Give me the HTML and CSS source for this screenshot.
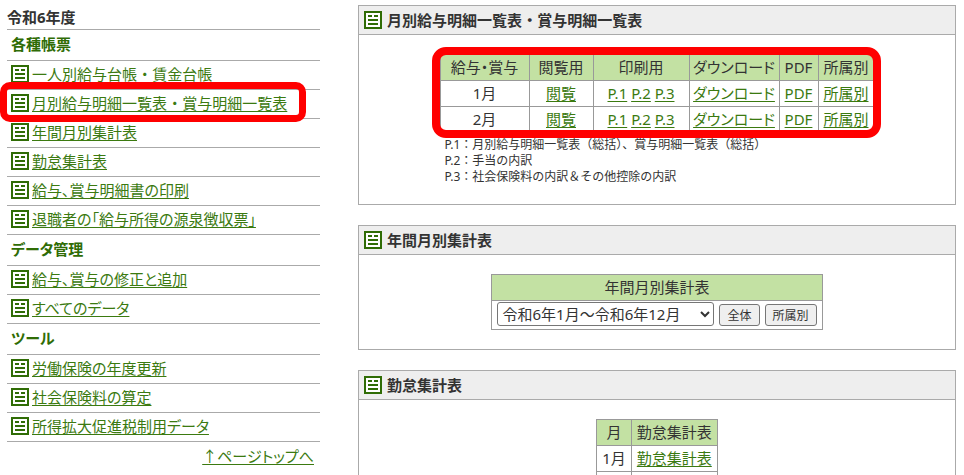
FILE: index.html
```
<!DOCTYPE html>
<html lang="ja">
<head>
    <meta charset="UTF-8">
    <meta name="viewport" content="width=device-width, initial-scale=1.0">
    <title>令和6年度 各種帳票</title>
    <link rel="stylesheet" href="styles.css">
</head>
<body>

<!-- Shared list icon -->
<svg class="sprite" aria-hidden="true">
    <symbol id="icon-list" viewBox="0 0 18 18">
        <rect x="1" y="1" width="16" height="16" fill="#fff" stroke="#2f6c05" stroke-width="2"/>
        <path d="M4 5h4M10 5h4M4 9h10M4 13h10" fill="none" stroke="#2f6c05" stroke-width="2"/>
    </symbol>
</svg>

<div class="container">
    <!-- Side menu -->
    <nav class="side-menu">
        <h1>令和6年度</h1>
        <h2>各種帳票</h2>
        <ul>
            <li><svg class="icon"><use href="#icon-list"/></svg><a href="#">一人別給与台帳 ・ 賃金台帳</a></li>
            <li class="marked"><svg class="icon"><use href="#icon-list"/></svg><a href="#monthly">月別給与明細一覧表 ・ 賞与明細一覧表</a></li>
            <li><svg class="icon"><use href="#icon-list"/></svg><a href="#yearly">年間月別集計表</a></li>
            <li><svg class="icon"><use href="#icon-list"/></svg><a href="#attendance">勤怠集計表</a></li>
            <li><svg class="icon"><use href="#icon-list"/></svg><a href="#">給与、賞与明細書の印刷</a></li>
            <li><svg class="icon"><use href="#icon-list"/></svg><a href="#">退職者の「給与所得の源泉徴収票」</a></li>
        </ul>
        <h2>データ管理</h2>
        <ul>
            <li><svg class="icon"><use href="#icon-list"/></svg><a href="#">給与、賞与の修正と追加</a></li>
            <li><svg class="icon"><use href="#icon-list"/></svg><a href="#">すべてのデータ</a></li>
        </ul>
        <h2>ツール</h2>
        <ul>
            <li><svg class="icon"><use href="#icon-list"/></svg><a href="#">労働保険の年度更新</a></li>
            <li><svg class="icon"><use href="#icon-list"/></svg><a href="#">社会保険料の算定</a></li>
            <li><svg class="icon"><use href="#icon-list"/></svg><a href="#">所得拡大促進税制用データ</a></li>
        </ul>
        <p class="page-top"><a href="#">↑ページトップへ</a></p>
    </nav>

    <main class="main">
        <!-- Monthly list -->
        <section class="panel" id="monthly">
            <h2><svg class="icon"><use href="#icon-list"/></svg>月別給与明細一覧表 ・ 賞与明細一覧表</h2>
            <div class="panel-body">
                <div class="monthly">
                    <div class="table-mark">
                        <table class="monthly-table">
                            <tr>
                                <th class="col-name">給与・賞与</th>
                                <th class="col-view">閲覧用</th>
                                <th class="col-print">印刷用</th>
                                <th class="col-download">ダウンロード</th>
                                <th class="col-pdf">PDF</th>
                                <th class="col-group">所属別</th>
                            </tr>
                            <tr>
                                <td>1月</td>
                                <td><a href="#">閲覧</a></td>
                                <td><a href="#">P.1</a> <a href="#">P.2</a> <a href="#">P.3</a></td>
                                <td><a href="#">ダウンロード</a></td>
                                <td><a href="#">PDF</a></td>
                                <td><a href="#">所属別</a></td>
                            </tr>
                            <tr>
                                <td>2月</td>
                                <td><a href="#">閲覧</a></td>
                                <td><a href="#">P.1</a> <a href="#">P.2</a> <a href="#">P.3</a></td>
                                <td><a href="#">ダウンロード</a></td>
                                <td><a href="#">PDF</a></td>
                                <td><a href="#">所属別</a></td>
                            </tr>
                        </table>
                    </div>
                    <p class="notes">
                        P.1：月別給与明細一覧表（総括）、賞与明細一覧表（総括）<br>
                        P.2：手当の内訳<br>
                        P.3：社会保険料の内訳＆その他控除の内訳
                    </p>
                </div>
            </div>
        </section>

        <!-- Yearly summary -->
        <section class="panel" id="yearly">
            <h2><svg class="icon"><use href="#icon-list"/></svg>年間月別集計表</h2>
            <div class="panel-body">
                <table>
                    <tr>
                        <th><label for="period">年間月別集計表</label></th>
                    </tr>
                    <tr>
                        <td>
                            <form class="period-form">
                                <select id="period">
                                    <option>令和6年1月～令和6年12月</option>
                                </select>
                                <button type="button">全体</button>
                                <button type="button">所属別</button>
                            </form>
                        </td>
                    </tr>
                </table>
            </div>
        </section>

        <!-- Attendance summary -->
        <section class="panel" id="attendance">
            <h2><svg class="icon"><use href="#icon-list"/></svg>勤怠集計表</h2>
            <div class="panel-body">
                <table>
                    <tr>
                        <th>月</th>
                        <th>勤怠集計表</th>
                    </tr>
                    <tr>
                        <td>1月</td>
                        <td><a href="#">勤怠集計表</a></td>
                    </tr>
                    <tr>
                        <td></td>
                        <td></td>
                    </tr>
                </table>
            </div>
        </section>
    </main>
</div>

</body>
</html>
```
FILE: styles.css
```
* {
    box-sizing: border-box;
}

body {
    margin: 0;
    padding: 5px 8px 0 7px;
    background: #fff;
    color: #333;
    font-family: "Noto Sans", "Noto Sans CJK JP", sans-serif;
    font-size: 15px;
    line-height: 20px;
    font-feature-settings: "palt";
}

h1, h2, ul, p {
    margin: 0;
    padding: 0;
}

a {
    color: #3b7a10;
    text-decoration: underline;
    text-underline-offset: 2px;
}

.sprite {
    display: none;
}

.icon {
    width: 18px;
    height: 18px;
    flex: none;
}

.container {
    display: flex;
    align-items: flex-start;
    gap: 38px;
}

/* Side menu */
.side-menu {
    flex: 313 1 0;
    min-width: 0;
}

.side-menu h1 {
    height: 25px;
    border-bottom: 1px solid #aaa;
    font-size: 15px;
    line-height: 24px;
}

.side-menu h2 {
    height: 31px;
    padding-left: 4px;
    border-bottom: 1px solid #aaa;
    color: #2f6c05;
    font-size: 15px;
    line-height: 28px;
}

.side-menu ul {
    list-style: none;
}

.side-menu li {
    display: flex;
    align-items: center;
    gap: 3px;
    position: relative;
    height: 29px;
    padding: 0 0 2px 4px;
    border-bottom: 1px solid #aaa;
    white-space: nowrap;
}

/* Red frame round the current menu item */
.side-menu .marked::after {
    content: "";
    position: absolute;
    top: -8px;
    right: 14px;
    bottom: -4px;
    left: -7px;
    border: 7px solid #f00;
    border-radius: 10px;
    pointer-events: none;
}

.page-top {
    padding: 4px 6px 0 0;
    text-align: right;
}

/* Panels */
.main {
    flex: 598 1 0;
    min-width: 0;
    display: flex;
    flex-direction: column;
    gap: 20px;
}

.panel {
    border: 1px solid #aaa;
}

.panel h2 {
    display: flex;
    align-items: center;
    gap: 5px;
    height: 29px;
    padding-left: 5px;
    border-bottom: 1px solid #aaa;
    background: #eee;
    font-size: 15px;
}

.panel-body {
    display: flex;
    justify-content: center;
    padding: 19px 10px;
}

table {
    border-collapse: collapse;
}

th, td {
    height: 26px;
    padding: 1px 5px 3px;
    border: 1px solid #999;
    font-weight: normal;
    text-align: center;
    white-space: nowrap;
}

th {
    background: #c3e1a3;
}

.monthly-table {
    table-layout: fixed;
    width: 434px;
}

.col-name {
    width: 89px;
}

.col-view {
    width: 64px;
}

.col-print {
    width: 96px;
}

.col-download {
    width: 90px;
}

.col-pdf {
    width: 39px;
}

.col-group {
    width: 56px;
}

.monthly-table th, .monthly-table td {
    padding: 1px 0 3px;
}

/* Red frame round the monthly table */
.table-mark {
    position: relative;
}

.table-mark::after {
    content: "";
    position: absolute;
    top: -7px;
    right: -6px;
    bottom: -5px;
    left: -8px;
    border: 8px solid #f00;
    border-radius: 14px;
    pointer-events: none;
}

.notes {
    padding: 4px 5px 0;
    font-size: 12px;
    line-height: 16px;
    font-feature-settings: normal;
}

.period-form {
    display: flex;
    align-items: flex-end;
    gap: 5px;
}

select {
    width: 217px;
    height: 24px;
    border: 1px solid #767676;
    border-radius: 3px;
    background-color: #fff;
    color: #333;
    font: inherit;
    font-feature-settings: inherit;
}

button {
    height: 22px;
    padding: 0 7px;
    border: 1px solid #767676;
    border-radius: 3px;
    background: #efefef;
    color: #333;
    font-family: inherit;
    font-size: 12px;
}
```
